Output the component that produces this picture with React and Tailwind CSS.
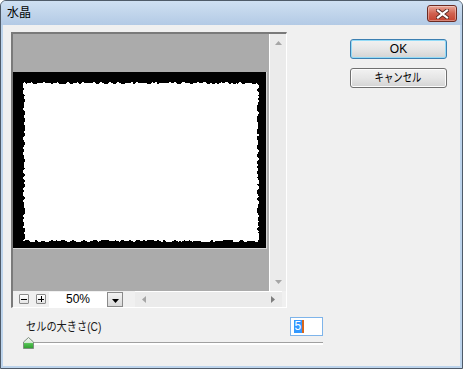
import React from "react";

// pseudo random for the torn edge of the white sheet
const rnd = (i) => {
  const s = Math.sin(i * 12.9898 + 78.233) * 43758.5453;
  return s - Math.floor(s);
};

// builds the jagged outline of the white sheet (black box coords)
const buildSheet = () => {
  const pts = [];
  let k = 0;
  const amp = 3;
  for (let x = 11; x < 245; x += 2) pts.push([x, 11 + (rnd(k++) - 0.5) * amp]);
  for (let y = 11; y < 169; y += 2) pts.push([245 + (rnd(k++) - 0.5) * amp, y]);
  for (let x = 245; x > 11; x -= 2) pts.push([x, 169 + (rnd(k++) - 0.5) * amp]);
  for (let y = 169; y > 11; y -= 2) pts.push([11 + (rnd(k++) - 0.5) * amp, y]);
  return "M" + pts.map((p) => `${p[0].toFixed(1)} ${p[1].toFixed(1)}`).join(" L") + " Z";
};

const sheetPath = buildSheet();

const font = "font-['Liberation_Sans','Noto_Sans_CJK_JP',sans-serif]";

// small square +/- zoom buttons
const ZoomBtn = ({ plus }) => (
  <div className="w-[10px] h-[10px] border border-[#8a8a8a] rounded-[1px] bg-linear-to-b from-white to-[#e4e4e4] flex items-center justify-center relative">
    <div className="w-[6px] h-[1px] bg-black" />
    {plus && <div className="absolute w-[1px] h-[6px] bg-black" />}
  </div>
);

const App = () => {
  return (
    <div className={`w-[463px] h-[369px] bg-white ${font}`}>
      <div className="w-full h-full flex flex-col border border-[#4f5b69] rounded-t-[6px] bg-[#bdd4ec] overflow-hidden">
        {/* title bar */}
        <div className="h-[24px] flex items-start justify-between pl-[6px] pr-[5px] bg-linear-to-b from-[#cfe0f2] to-[#b3cae5]">
          <span className="mt-[5px] text-[12px] leading-[14px] text-black">水晶</span>
          <div className="mt-[4px] w-[30px] h-[17px] rounded-[3px] border border-[#6b2a22] bg-linear-to-b from-[#e8a597] via-[#d0614f] to-[#c4432f] flex items-center justify-center shadow-[inset_0_0_0_1px_rgba(255,255,255,0.35)]">
            <svg width="13" height="10" viewBox="0 0 13 10">
              <path d="M2 1.5 L11 8.5 M11 1.5 L2 8.5" stroke="#5a2a24" strokeWidth="4" strokeLinecap="square" />
              <path d="M2 1.5 L11 8.5 M11 1.5 L2 8.5" stroke="#ffffff" strokeWidth="2.2" strokeLinecap="square" />
            </svg>
          </div>
        </div>

        {/* client area */}
        <div className="flex-1 mx-[2px] mb-[2px] bg-[#f0f0f0] flex flex-col">
          <div className="flex items-start">
            {/* preview panel */}
            <div className="ml-[8px] mt-[7px] w-[276px] h-[276px] border-l-2 border-t-2 border-l-[#7a7a7a] border-t-[#7a7a7a] border-r border-b border-r-white border-b-white flex flex-col">
              <div className="flex h-[257px]">
                {/* viewport */}
                <div className="w-[256px] h-full bg-[#ababab] pt-[38px]">
                  <div className="w-[254px] h-[177px] bg-black border-r border-b border-[#d6d6d6]">
                    <svg width="253" height="176" viewBox="0 0 253 176" shapeRendering="crispEdges">
                      <path d={sheetPath} fill="#ffffff" />
                    </svg>
                  </div>
                </div>
                {/* vertical scrollbar */}
                <div className="w-[17px] h-full bg-[#ebebeb] border-l border-white flex flex-col items-center justify-between py-[7px]">
                  <svg width="7" height="4" viewBox="0 0 7 4">
                    <path d="M3.5 0 L7 4 L0 4 Z" fill="#a6a6a6" />
                  </svg>
                  <svg width="7" height="4" viewBox="0 0 7 4">
                    <path d="M0 0 L7 0 L3.5 4 Z" fill="#a6a6a6" />
                  </svg>
                </div>
              </div>
              {/* bottom bar */}
              <div className="h-[16px] flex items-stretch">
                <div className="w-[122px] flex items-center bg-[#f0f0f0]">
                  <div className="ml-[6px]">
                    <ZoomBtn />
                  </div>
                  <div className="ml-[7px]">
                    <ZoomBtn plus />
                  </div>
                  <div className="ml-[3px] w-[58px] h-[15px] bg-white flex items-center justify-center text-[12px] leading-[13px] text-black">
                    50%
                  </div>
                  <div className="w-[16px] h-[15px] border border-[#8a8a8a] bg-linear-to-b from-[#f4f4f4] to-[#d9d9d9] flex items-end justify-center pb-[3px]">
                    <svg width="7" height="4" viewBox="0 0 7 4">
                      <path d="M0 0 L7 0 L3.5 4 Z" fill="#000" />
                    </svg>
                  </div>
                </div>
                <div className="w-[147px] bg-[#ebebeb] border-t border-white flex items-center justify-between px-[7px]">
                  <svg width="4" height="7" viewBox="0 0 4 7">
                    <path d="M4 0 L4 7 L0 3.5 Z" fill="#a6a6a6" />
                  </svg>
                  <svg width="4" height="7" viewBox="0 0 4 7">
                    <path d="M0 0 L4 3.5 L0 7 Z" fill="#7d7d7d" />
                  </svg>
                </div>
                <div className="flex-1 bg-[#f0f0f0]" />
              </div>
            </div>

            {/* buttons */}
            <div className="ml-[63px] mt-[14px] flex flex-col">
              <button className="w-[97px] h-[20px] rounded-[3px] border border-[#3c7fb1] bg-linear-to-b from-[#f2f2f2] via-[#e6e6e6] to-[#d3d3d3] shadow-[inset_0_0_0_1px_#93dbf7] flex items-center justify-center text-[12px] leading-[14px] text-black">
                OK
              </button>
              <button className="mt-[9px] w-[97px] h-[20px] rounded-[3px] border border-[#707070] bg-linear-to-b from-[#f2f2f2] via-[#e6e6e6] to-[#d3d3d3] shadow-[inset_0_0_0_1px_#fcfcfc] flex items-center justify-center text-[12px] leading-[14px] text-black">
                <span className="inline-block scale-x-[0.78]">キャンセル</span>
              </button>
            </div>
          </div>

          {/* cell size row */}
          <div className="mt-[9px] ml-[23px] w-[297px] h-[19px] flex items-center justify-between">
            <span className="inline-block origin-left scale-x-[0.85] text-[12px] leading-[14px] text-[#1a1a1a] mt-[1px]">
              セルの大きさ(C)
            </span>
            <div className="w-[33px] h-[19px] border border-[#7eb4ea] bg-white flex items-center pl-[3px]">
              <span className="bg-[#3399ff] text-white text-[12px] leading-[13px] px-[0.5px]">5</span>
              <span className="w-[2px] h-[13px] bg-[#d8661c]" />
            </div>
          </div>

          {/* slider */}
          <div className="relative ml-[18px] w-[302px] h-[14px]">
            <div className="absolute left-[5px] right-0 top-[6px] h-[1px] bg-[#a0a0a0]" />
            <div className="absolute left-[5px] right-0 top-[7px] h-[2px] bg-white" />
            <svg className="absolute left-[2px] top-[1px]" width="11" height="12" viewBox="0 0 11 12">
              <defs>
                <linearGradient id="thumb" x1="0" y1="0" x2="0" y2="1">
                  <stop offset="0" stopColor="#f4f4f4" />
                  <stop offset="0.45" stopColor="#d9e9d9" />
                  <stop offset="0.55" stopColor="#52c252" />
                  <stop offset="1" stopColor="#2e9e2e" />
                </linearGradient>
              </defs>
              <path d="M5.5 0.5 L10.5 5 L10.5 11.5 L0.5 11.5 L0.5 5 Z" fill="url(#thumb)" stroke="#7f8f7f" />
            </svg>
          </div>
        </div>
      </div>
    </div>
  );
};

export default App;
